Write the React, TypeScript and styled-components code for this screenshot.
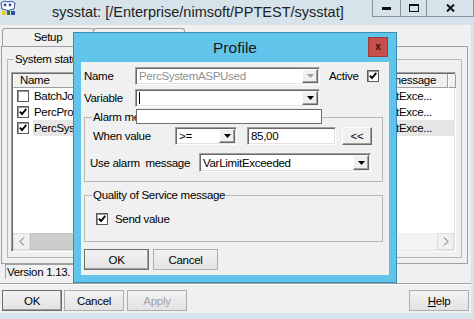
import React from "react"
import styled, { createGlobalStyle, css } from "styled-components"

const uiFont = `"Liberation Sans", Arial, sans-serif`

const GlobalStyle = createGlobalStyle`
  html, body { margin: 0; padding: 0; }
  body {
    background: #d6e3ea;
    font-family: ${uiFont};
    font-size: 11.5px;
    letter-spacing: -0.3px;
    color: #000;
  }
  #root { width: 474px; height: 319px; overflow: hidden; }
`

const sunken = css`
  border: 1px solid;
  border-color: #a0a0a0 #ffffff #ffffff #a0a0a0;
  box-shadow: inset 1px 1px 0 #696969, inset -1px -1px 0 #e3e3e3;
`

const raised = css`
  border: 1px solid;
  border-color: #ffffff #696969 #696969 #ffffff;
  box-shadow: inset -1px -1px 0 #a0a0a0;
`

const Window = styled.div`
  position: relative;
  width: 474px;
  height: 319px;
  display: flex;
  flex-direction: column;
  background: #d6e3ea;
`

const TitleBar = styled.div`
  height: 25px;
  flex-shrink: 0;
  display: flex;
  align-items: flex-start;
`

const AppIcon = styled.svg`
  width: 16px;
  height: 16px;
  flex-shrink: 0;
`

const WindowTitle = styled.div`
  margin-left: 36px;
  line-height: 25px;
  font-size: 14.5px;
  letter-spacing: 0;
  color: #222;
  white-space: nowrap;
`

const Controls = styled.div`
  margin-left: auto;
  display: flex;
`

const CtrlButton = styled.div<{ $w: number }>`
  width: ${(p) => p.$w}px;
  height: 17px;
  box-sizing: border-box;
  border: 1px solid #8795a0;
  border-top: none;
  margin-left: -1px;
  display: flex;
  align-items: center;
  justify-content: center;
  color: #111;
`

const Client = styled.div`
  flex: 1;
  margin: 0 3px 6px 0;
  background: #f0f0f0;
  display: flex;
  flex-direction: column;
`

const TabStrip = styled.div`
  display: flex;
  padding: 3px 0 0 2px;
  height: 21px;
  box-sizing: border-box;
`

const Tab = styled.div<{ $w: number }>`
  width: ${(p) => p.$w}px;
  height: 18px;
  box-sizing: border-box;
  border: 1px solid #a0a0a0;
  border-bottom: none;
  border-radius: 3px 3px 0 0;
  margin-right: -1px;
  background: #f0f0f0;
  text-align: center;
  line-height: 17px;
`

const TabPanel = styled.div`
  height: 218px;
  box-sizing: border-box;
  margin: 0 3px 0 1px;
  border: 1px solid #a0a0a0;
  padding: 5px 5px 5px 5px;
`

const GroupBox = styled.fieldset<{ $pad: string }>`
  margin: 0;
  padding: ${(p) => p.$pad};
  border: 1px solid #b8b8b8;
  min-width: 0;
`

const Caption = styled.legend<{ $shift?: number }>`
  padding: 0 1px;
  margin-left: ${(p) => p.$shift ?? 0}px;
  line-height: 14px;
  white-space: nowrap;
`

const ListView = styled.div`
  height: 180px;
  box-sizing: border-box;
  ${sunken};
  background: #fff;
  display: flex;
  flex-direction: column;
  padding: 1px;
`

const columns = "170px 90px 80px 95px 1fr"

const HeaderRow = styled.div`
  display: grid;
  grid-template-columns: ${columns};
  height: 14px;
  flex-shrink: 0;
`

const HeaderCell = styled.div`
  box-sizing: border-box;
  background: #f0f0f0;
  border-right: 1px solid #a0a0a0;
  border-bottom: 1px solid #a0a0a0;
  border-left: 1px solid #fff;
  padding-left: 6px;
  line-height: 13px;
  white-space: nowrap;
  overflow: hidden;
`

const Rows = styled.div`
  flex: 1;
`

const Row = styled.div`
  display: grid;
  grid-template-columns: ${columns};
  height: 16px;
  align-items: stretch;
`

const NameCell = styled.div`
  display: flex;
  align-items: center;
  padding-left: 4px;
  gap: 4px;
  white-space: nowrap;
  overflow: hidden;
`

const Cell = styled.div<{ $sel?: boolean }>`
  display: flex;
  align-items: center;
  padding-left: 7px;
  white-space: nowrap;
  overflow: hidden;
  background: ${(p) => (p.$sel ? "#e6e6e6" : "transparent")};
`

const NameText = styled(Cell)`
  flex: 1;
  align-self: stretch;
  padding-left: 1px;
`

const CheckBox = styled.span`
  width: 12px;
  height: 12px;
  box-sizing: border-box;
  flex-shrink: 0;
  background: #fff;
  border: 1px solid #5a5a5a;
  box-shadow: inset 1px 1px 0 #9a9a9a;
  display: inline-flex;
  align-items: center;
  justify-content: center;
`

const HScroll = styled.div`
  height: 17px;
  flex-shrink: 0;
  display: flex;
  background: #f3f3f3;
`

const ScrollArrow = styled.div`
  width: 17px;
  box-sizing: border-box;
  border: 1px solid #dcdcdc;
  background: #f0f0f0;
  display: flex;
  align-items: center;
  justify-content: center;
`

const ScrollThumb = styled.div`
  width: 220px;
  background: #cdcdcd;
  border: 1px solid #c4c4c4;
  box-sizing: border-box;
`

const ScrollTrack = styled.div`
  flex: 1;
`

const StatusLabel = styled.div`
  margin-left: 5px;
  width: 190px;
  height: 15px;
  box-sizing: border-box;
  border-top: 1px solid #a0a0a0;
  border-left: 1px solid #a0a0a0;
  padding-left: 1px;
  line-height: 14px;
  white-space: nowrap;
`

const Separator = styled.div`
  margin-top: 4px;
  border-top: 1px solid #a0a0a0;
  border-bottom: 1px solid #ffffff;
`

const ButtonBar = styled.div`
  margin-top: 5px;
  padding: 0 2px;
  display: flex;
  gap: 2px;
`

const PushButton = styled.div<{ $w?: number; $default?: boolean; $disabled?: boolean; $push?: boolean }>`
  width: ${(p) => p.$w ?? 60}px;
  height: 21px;
  box-sizing: border-box;
  background: linear-gradient(#f2f2f2, #e3e3e3);
  border: 1px solid #adadad;
  display: flex;
  align-items: center;
  justify-content: center;
  color: ${(p) => (p.$disabled ? "#a3a3a3" : "#000")};
  margin-left: ${(p) => (p.$push ? "auto" : "0")};
  ${(p) =>
    p.$default &&
    css`
      border-color: #6d6d6d;
      box-shadow: inset -1px -1px 0 #a0a0a0;
    `}
`

const Dialog = styled.div`
  position: absolute;
  left: 73px;
  top: 32px;
  width: 324px;
  height: 251px;
  box-sizing: border-box;
  border: 1px solid #3a8db5;
  background: #61c5eb;
  display: flex;
  flex-direction: column;
  padding: 0 7px 7px 7px;
  z-index: 5;
`

const DialogTitleBar = styled.div`
  height: 29px;
  flex-shrink: 0;
  display: grid;
  grid-template-columns: 1fr auto 1fr;
  align-items: center;
`

const DialogTitle = styled.div`
  grid-column: 2;
  font-size: 15.5px;
  letter-spacing: 0;
  color: #1a1a1a;
  padding-top: 1px;
`

const CloseButton = styled.div`
  grid-column: 3;
  justify-self: end;
  align-self: start;
  margin: 4px 1px 0 0;
  width: 20px;
  height: 20px;
  box-sizing: border-box;
  background: #c7504b;
  border: 1px solid #9c3b37;
  display: flex;
  align-items: center;
  justify-content: center;
  font-size: 10px;
  font-weight: bold;
  letter-spacing: 0;
  color: #2a1515;
  line-height: 1;
`

const DialogBody = styled.div`
  flex: 1;
  background: #f0f0f0;
  padding: 5px 6px 5px 3px;
  display: flex;
  flex-direction: column;
`

const FormRow = styled.div<{ $h?: number; $mt?: number }>`
  display: flex;
  align-items: center;
  height: ${(p) => p.$h ?? 18}px;
  margin-top: ${(p) => p.$mt ?? 0}px;
  flex-shrink: 0;
`

const FieldLabel = styled.div<{ $w: number; $shift?: number }>`
  width: ${(p) => p.$w}px;
  margin-left: ${(p) => p.$shift ?? 0}px;
  white-space: nowrap;
  flex-shrink: 0;
`

const ComboBox = styled.div<{ $w: number }>`
  position: relative;
  width: ${(p) => p.$w}px;
  height: 100%;
  box-sizing: border-box;
  ${sunken};
  background: #fff;
  display: flex;
  align-items: stretch;
  padding: 1px;
  flex-shrink: 0;
`

const ComboText = styled.div<{ $disabled?: boolean }>`
  flex: 1;
  display: flex;
  align-items: center;
  padding-left: 2px;
  white-space: nowrap;
  overflow: hidden;
  color: ${(p) => (p.$disabled ? "#8f8f8f" : "#000")};
`

const Caret = styled.span`
  width: 1px;
  height: 12px;
  background: #000;
`

const DropButton = styled.div`
  width: 16px;
  box-sizing: border-box;
  ${raised};
  background: #f0f0f0;
  display: flex;
  align-items: center;
  justify-content: center;
`

const DropList = styled.div`
  position: absolute;
  left: 0;
  top: calc(100% + 3px);
  width: 186px;
  height: 15px;
  box-sizing: border-box;
  background: #fff;
  border: 1px solid #6d6d6d;
  z-index: 3;
`

const EditBox = styled.div<{ $w: number; $ml?: number }>`
  width: ${(p) => p.$w}px;
  height: 100%;
  margin-left: ${(p) => p.$ml ?? 0}px;
  box-sizing: border-box;
  ${sunken};
  background: #fff;
  padding-left: 3px;
  display: flex;
  align-items: center;
`

const SmallButton = styled.div<{ $w: number; $ml?: number }>`
  width: ${(p) => p.$w}px;
  height: 100%;
  margin-left: ${(p) => p.$ml ?? 0}px;
  box-sizing: border-box;
  ${raised};
  background: #f0f0f0;
  display: flex;
  align-items: center;
  justify-content: center;
`

const InlineLabel = styled.span<{ $ml?: number }>`
  margin-left: ${(p) => p.$ml ?? 0}px;
  white-space: nowrap;
`

const CheckRow = styled.label`
  display: flex;
  align-items: center;
  gap: 7px;
`

const DialogButtons = styled.div`
  margin-top: 7px;
  display: flex;
  gap: 4px;
`

const Check = ({ on }: { on?: boolean }) => (
  <CheckBox>
    {on && (
      <svg width="8" height="8" viewBox="0 0 8 8">
        <path d="M0.8 3.6 L3 6 L7.3 0.9" fill="none" stroke="#000" strokeWidth="1.9" />
      </svg>
    )}
  </CheckBox>
)

const Arrow = ({ color = "#000" }: { color?: string }) => (
  <svg width="7" height="4" viewBox="0 0 7 4">
    <polygon points="0,0 7,0 3.5,4" fill={color} />
  </svg>
)

const Chevron = ({ dir }: { dir: "left" | "right" }) => (
  <svg width="6" height="9" viewBox="0 0 6 9">
    <path d={dir === "left" ? "M5 0.5 L1 4.5 L5 8.5" : "M1 0.5 L5 4.5 L1 8.5"} fill="none" stroke="#606060" strokeWidth="1" />
  </svg>
)

const rows = [
  { name: "BatchJobsQueued", value: "12", limit: "90,00", on: false },
  { name: "PercProcessorTime", value: "7,21", limit: "90,00", on: true },
  { name: "PercSystemASPUsed", value: "31,40", limit: "85,00", on: true },
]

export default function App() {
  return (
    <>
      <GlobalStyle />
      <Window>
        <TitleBar>
          <AppIcon viewBox="0 0 16 16">
            <rect x="0" y="0" width="16" height="16" fill="#d6e3ea" />
            <path d="M1 3 Q4 0 8 2 Q12 0 15 3 L14 9 Q8 12 2 9 Z" fill="#ffffff" stroke="#2d4f9e" strokeWidth="1" />
            <circle cx="5" cy="5" r="1.4" fill="#2d4f9e" />
            <circle cx="10" cy="5" r="1.4" fill="#2d4f9e" />
            <rect x="2" y="11" width="4" height="4" fill="#f2c81a" />
            <rect x="7" y="11" width="3" height="4" fill="#1e7a2c" />
            <rect x="11" y="11" width="4" height="4" fill="#2d4f9e" />
          </AppIcon>
          <WindowTitle>sysstat: [/Enterprise/nimsoft/PPTEST/sysstat]</WindowTitle>
          <Controls>
            <CtrlButton $w={29}>
              <svg width="9" height="3"><rect width="9" height="3" fill="#111" /></svg>
            </CtrlButton>
            <CtrlButton $w={27}>
              <svg width="10" height="8"><rect x="0.5" y="0.5" width="9" height="7" fill="none" stroke="#111" /><rect x="0" y="0" width="10" height="2" fill="#111" /></svg>
            </CtrlButton>
            <CtrlButton $w={48}>
              <svg width="9" height="8" viewBox="0 0 9 8">
                <path d="M1 0.5 L8 7.5 M8 0.5 L1 7.5" stroke="#111" strokeWidth="2" />
              </svg>
            </CtrlButton>
          </Controls>
        </TitleBar>

        <Client>
          <TabStrip>
            <Tab $w={92}>Setup</Tab>
            <Tab $w={92}>Status</Tab>
          </TabStrip>
          <TabPanel>
            <GroupBox $pad="6px 5px 5px 3px">
              <Caption $shift={3}>System status</Caption>
              <ListView>
                <HeaderRow>
                  <HeaderCell>Name</HeaderCell>
                  <HeaderCell>Value</HeaderCell>
                  <HeaderCell>Threshold</HeaderCell>
                  <HeaderCell>Alarm message</HeaderCell>
                  <HeaderCell />
                </HeaderRow>
                <Rows>
                  {rows.map((r, i) => {
                    const sel = i === 2
                    return (
                      <Row key={r.name}>
                        <NameCell>
                          <Check on={r.on} />
                          <NameText $sel={sel}>{r.name}</NameText>
                        </NameCell>
                        <Cell $sel={sel}>{r.value}</Cell>
                        <Cell $sel={sel}>{r.limit}</Cell>
                        <Cell $sel={sel}>VarLimitExce...</Cell>
                        <Cell $sel={sel} />
                      </Row>
                    )
                  })}
                </Rows>
                <HScroll>
                  <ScrollArrow><Chevron dir="left" /></ScrollArrow>
                  <ScrollThumb />
                  <ScrollTrack />
                  <ScrollArrow><Chevron dir="right" /></ScrollArrow>
                </HScroll>
              </ListView>
            </GroupBox>
          </TabPanel>
          <StatusLabel>Version 1.13.</StatusLabel>
          <Separator />
          <ButtonBar>
            <PushButton $default>OK</PushButton>
            <PushButton>Cancel</PushButton>
            <PushButton $disabled style={{ marginLeft: 1 }}>Apply</PushButton>
            <PushButton $push>
              <span><u>H</u>elp</span>
            </PushButton>
          </ButtonBar>
        </Client>

        <Dialog>
          <DialogTitleBar>
            <DialogTitle>Profile</DialogTitle>
            <CloseButton>x</CloseButton>
          </DialogTitleBar>
          <DialogBody>
            <FormRow>
              <FieldLabel $w={51}>Name</FieldLabel>
              <ComboBox $w={185}>
                <ComboText $disabled>PercSystemASPUsed</ComboText>
                <DropButton><Arrow color="#a0a0a0" /></DropButton>
              </ComboBox>
              <InlineLabel $ml={9}>Active</InlineLabel>
              <span style={{ marginLeft: 8, display: "flex" }}><Check on /></span>
            </FormRow>
            <FormRow $mt={4}>
              <FieldLabel $w={51}>Variable</FieldLabel>
              <ComboBox $w={185}>
                <ComboText><Caret /></ComboText>
                <DropButton><Arrow /></DropButton>
                <DropList />
              </ComboBox>
            </FormRow>

            <GroupBox $pad="3px 10px 9px 8px" style={{ marginTop: 3 }}>
              <Caption $shift={-1}>Alarm message</Caption>
              <FormRow>
                <FieldLabel $w={82}>When value</FieldLabel>
                <ComboBox $w={62}>
                  <ComboText>&gt;=</ComboText>
                  <DropButton><Arrow /></DropButton>
                </ComboBox>
                <EditBox $w={89} $ml={10}>85,00</EditBox>
                <SmallButton $w={30} $ml={6}>&lt;&lt;</SmallButton>
              </FormRow>
              <FormRow $h={19} $mt={8}>
                <FieldLabel $w={109} $shift={-3}>Use alarm&nbsp; message</FieldLabel>
                <ComboBox $w={172}>
                  <ComboText>VarLimitExceeded</ComboText>
                  <DropButton><Arrow /></DropButton>
                </ComboBox>
              </FormRow>
            </GroupBox>

            <GroupBox $pad="10px 10px 15px 11px" style={{ marginTop: 6 }}>
              <Caption $shift={-4}>Quality of Service message</Caption>
              <FormRow $h={14}>
                <CheckRow>
                  <Check on />
                  Send value
                </CheckRow>
              </FormRow>
            </GroupBox>

            <DialogButtons>
              <PushButton $w={65} $default>OK</PushButton>
              <PushButton $w={65}>Cancel</PushButton>
            </DialogButtons>
          </DialogBody>
        </Dialog>
      </Window>
    </>
  )
}
